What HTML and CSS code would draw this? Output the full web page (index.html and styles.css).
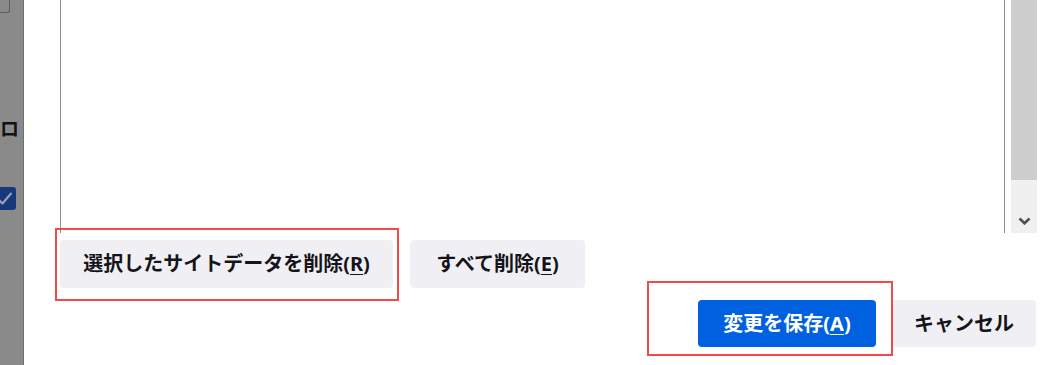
FILE: index.html
```html
<!DOCTYPE html>
<html lang="ja">
<head>
<meta charset="utf-8">
<title>サイトデータの管理</title>
<link rel="stylesheet" href="styles.css">
</head>
<body>
<div class="page">
  <div class="backdrop">
    <div class="bd-box"></div>
    <div class="bd-text">ロ</div>
    <div class="bd-check">
      <svg width="23" height="23" viewBox="0 0 23 23"><rect x="0" y="0" width="23" height="23" rx="3" fill="#17397a"/><polyline points="5,12 9.5,16.5 18,6.5" fill="none" stroke="#9aa4b8" stroke-width="2" stroke-linecap="round" stroke-linejoin="round"/></svg>
    </div>
  </div>
  <div class="dialog">
    <div class="list-row">
      <div class="listbox"></div>
      <div class="scrollbar">
        <div class="thumb"></div>
        <div class="track">
          <svg width="13" height="8" viewBox="0 0 13 8"><polyline points="1.5,1.5 6.5,6.3 11.5,1.5" fill="none" stroke="#505050" stroke-width="2.6" stroke-linejoin="miter"/></svg>
        </div>
      </div>
    </div>
    <div class="actions">
      <button class="btn btn-remove">選択したサイトデータを削除(<u>R</u>)</button>
      <button class="btn btn-all">すべて削除(<u>E</u>)</button>
    </div>
    <div class="footer">
      <button class="btn btn-primary btn-save">変更を保存(<u>A</u>)</button>
      <button class="btn btn-cancel">キャンセル</button>
    </div>
  </div>
  <div class="mark mark-remove"></div>
  <div class="mark mark-save"></div>
</div>
</body>
</html>
```
FILE: styles.css
```css
html, body {
  margin: 0;
  padding: 0;
  background: #ffffff;
}

.page {
  position: relative;
  display: flex;
  width: 1043px;
  height: 365px;
  overflow: hidden;
  font-family: "Noto Sans CJK JP", "Noto Sans", sans-serif;
}

.backdrop {
  flex: none;
  width: 23px;
  background: #8a8a8a;
  display: flex;
  flex-direction: column;
}

.bd-box {
  width: 9px;
  height: 12px;
  border-right: 1px solid #5e5e5e;
  border-bottom: 1px solid #5e5e5e;
  border-bottom-right-radius: 3px;
}

.bd-text {
  margin-top: 103px;
  height: 24px;
  line-height: 24px;
  font-size: 19px;
  font-weight: 700;
  color: #121212;
}

.bd-check {
  margin-top: 47px;
  margin-left: -7px;
  height: 23px;
}

.bd-check svg {
  display: block;
}

.dialog {
  flex: 1;
  background: #ffffff;
  border-left: 1px solid #6f6f6f;
  padding: 0 6px 0 36px;
  display: flex;
  flex-direction: column;
}

.list-row {
  display: flex;
  gap: 6px;
  height: 233px;
}

.listbox {
  flex: 1;
  border-left: 1px solid #8f8f9d;
  border-right: 1px solid #8f8f9d;
}

.scrollbar {
  width: 26px;
  display: flex;
  flex-direction: column;
}

.thumb {
  height: 180px;
  background: #cdcdcd;
}

.track {
  flex: 1;
  background: #f0f0f0;
  display: flex;
  align-items: flex-end;
  justify-content: center;
  padding-bottom: 8px;
}

.track svg {
  display: block;
}

.actions {
  margin-top: 7px;
  display: flex;
  gap: 17px;
}

.footer {
  margin-top: 12px;
  display: flex;
  justify-content: flex-end;
  gap: 16px;
  padding-right: 1px;
}

.btn {
  box-sizing: border-box;
  height: 48px;
  padding: 0;
  border: none;
  border-radius: 4px;
  background: #f0f0f4;
  color: #15141a;
  font-family: "Noto Sans", "Noto Sans CJK JP", sans-serif;
  font-size: 20px;
  font-weight: 700;
  line-height: 1;
  display: flex;
  align-items: center;
  justify-content: center;
  white-space: nowrap;
}

.btn-remove { width: 333px; }
.btn-all { width: 175px; }
.btn-save { width: 178px; }
.btn-cancel { width: 144px; }

.footer .btn {
  height: 47px;
}

.btn u {
  text-decoration-thickness: 1px;
  text-underline-offset: 3px;
}

.btn-primary {
  background: #0061e0;
  color: #ffffff;
}

.mark {
  position: absolute;
  border: 2px solid #f24a4a;
  box-sizing: border-box;
  pointer-events: none;
}

.mark-remove {
  left: 55px;
  top: 228px;
  width: 344px;
  height: 73px;
}

.mark-save {
  left: 647px;
  top: 281px;
  width: 246px;
  height: 75px;
}
```
